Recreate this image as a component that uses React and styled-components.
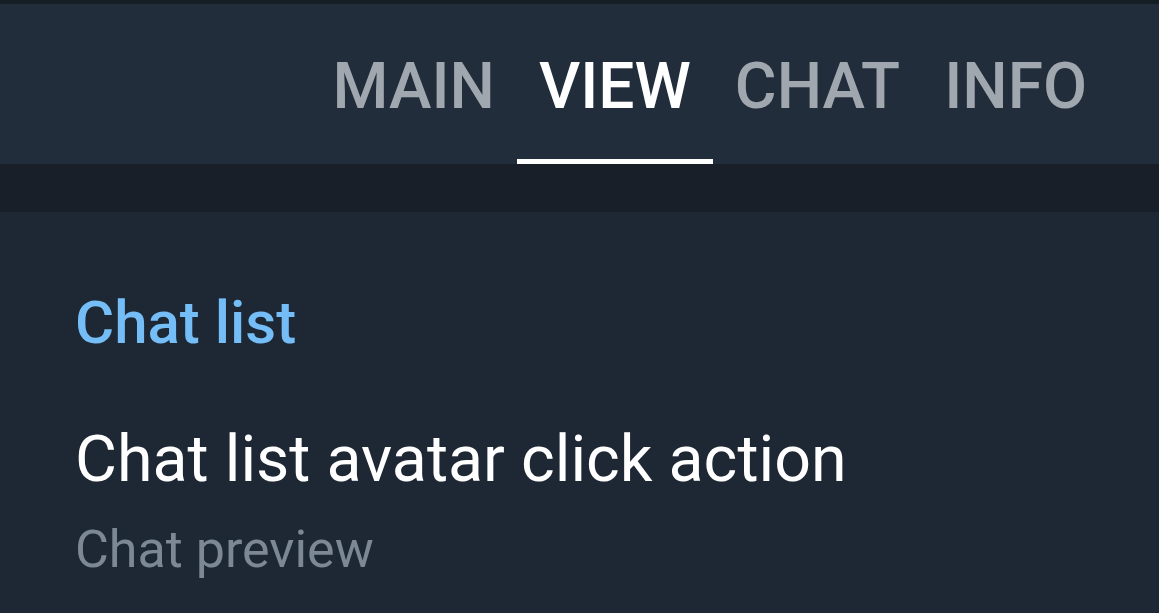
import React from "react";
import styled, { createGlobalStyle } from "styled-components";

const GlobalStyle = createGlobalStyle`
  html, body {
    margin: 0;
    padding: 0;
    background: #1e2734;
    font-family: Roboto, "Noto Sans", sans-serif;
    -webkit-font-smoothing: antialiased;
  }
`;

const tabs = ["MAIN", "VIEW", "CHAT", "INFO"];

const App = () => {
  const active = "VIEW";

  return (
    <>
      <GlobalStyle />
      <Page>
        <StatusStrip />
        <Header>
          <Tabs>
            {tabs.map((t) => (
              <Tab key={t} $active={t === active}>
                {t}
              </Tab>
            ))}
          </Tabs>
        </Header>
        <Divider />
        <Section>
          <SectionTitle>Chat list</SectionTitle>
          <Setting>
            <SettingTitle>Chat list avatar click action</SettingTitle>
            <SettingValue>Chat preview</SettingValue>
          </Setting>
        </Section>
      </Page>
    </>
  );
};

export default App;

const Page = styled.div`
  width: 1159px;
  height: 613px;
  overflow: hidden;
  display: flex;
  flex-direction: column;
  background: #1e2734;
`;

const StatusStrip = styled.div`
  height: 4px;
  background: #151d25;
`;

const Header = styled.div`
  height: 160px;
  background: #222d3b;
  display: flex;
  justify-content: flex-end;
  padding-right: 50px;
`;

const Tabs = styled.div`
  display: flex;
  align-items: stretch;
`;

const Tab = styled.div`
  position: relative;
  display: flex;
  align-items: center;
  padding: 4px 22px 0;
  font-size: 64px;
  font-weight: 500;
  color: ${(p) => (p.$active ? "#ffffff" : "#a1a7af")};

  &::after {
    content: "";
    position: absolute;
    left: 0;
    right: 0;
    bottom: 0;
    height: 5px;
    background: ${(p) => (p.$active ? "#ffffff" : "transparent")};
  }
`;

const Divider = styled.div`
  height: 48px;
  background: #181f29;
`;

const Section = styled.div`
  padding: 81px 75px 0;
  display: flex;
  flex-direction: column;
`;

const SectionTitle = styled.div`
  font-size: 60px;
  font-weight: 500;
  color: #74bdf6;
  line-height: 1;
`;

const Setting = styled.div`
  display: flex;
  flex-direction: column;
  margin-top: 74px;
`;

const SettingTitle = styled.div`
  font-size: 64.5px;
  color: #ffffff;
  line-height: 1;
`;

const SettingValue = styled.div`
  font-size: 52px;
  color: #7c8896;
  line-height: 1;
  margin-top: 32px;
`;
